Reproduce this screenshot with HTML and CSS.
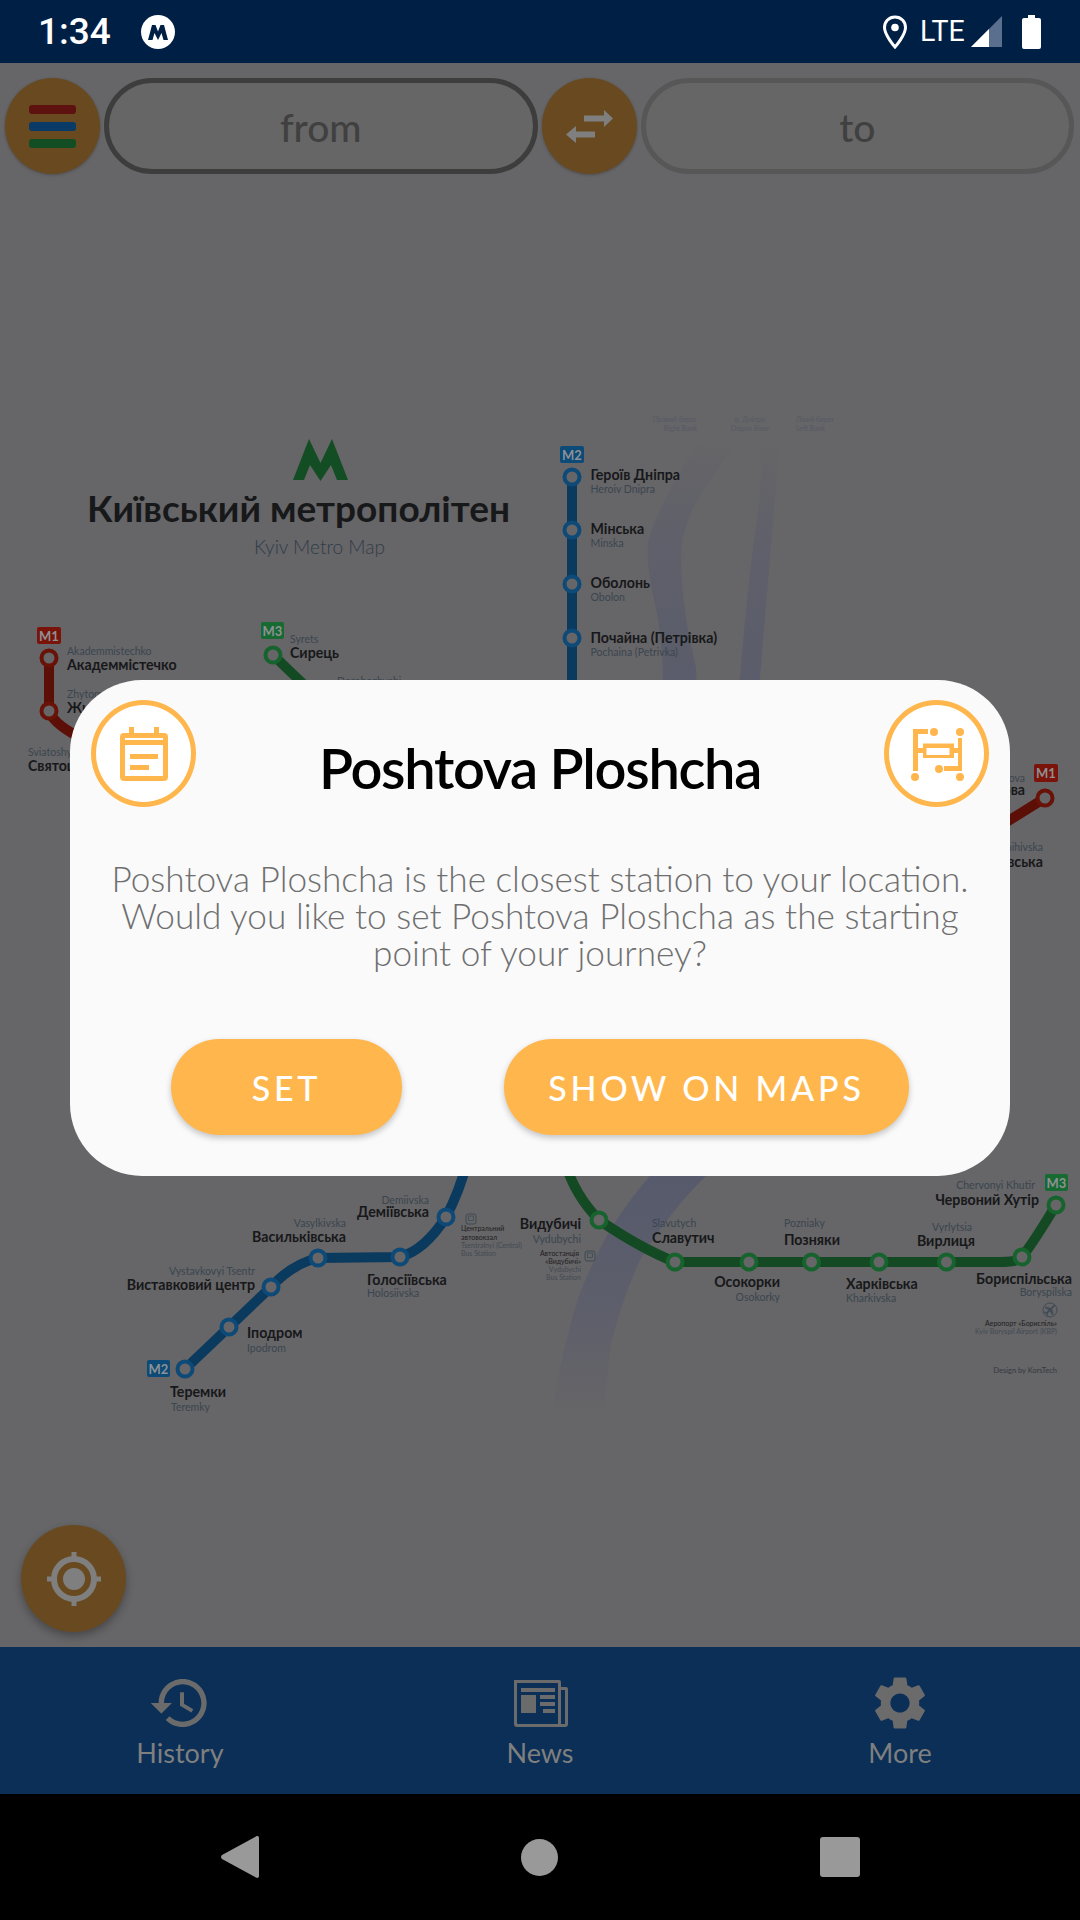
FILE: index.html
```html
<!DOCTYPE html>
<html lang="en">
<head>
<meta charset="utf-8">
<title>Kyiv Metro Map</title>
<link rel="stylesheet" href="styles.css">
</head>
<body>
<div class="screen">
  <header class="statusbar">
    <div class="status-left">
      <span class="clock">1:34</span>
      <svg class="status-m" viewBox="0 0 34 34"><circle cx="17" cy="17" r="17" fill="#fff"/><path d="M7 25 11 10h3.500L17 16.500 19.500 10H23l4 15h-4.500l-2-7L17 25l-3.500-7-2 7z" fill="#001f45"/></svg>
    </div>
    <div class="status-right">
      <svg class="status-pin" viewBox="0 0 24 34"><path d="M12 2C6 2 1.500 6.500 1.500 12.500 1.500 20 12 32 12 32s10.500-12 10.500-19.500C22.500 6.500 18 2 12 2z" fill="none" stroke="#fff" stroke-width="3"/><circle cx="12" cy="12.500" r="3.800" fill="#fff"/></svg>
      <span class="lte">LTE</span>
      <svg class="status-signal" viewBox="0 0 31 31"><path d="M31 0v31H0z" fill="#5a6f8d"/><path d="M18 13v18H0z" fill="#fff"/></svg>
      <svg class="status-battery" viewBox="0 0 19 34"><path d="M6 0h7v3h4a2 2 0 0 1 2 2v27a2 2 0 0 1-2 2H2a2 2 0 0 1-2-2V5a2 2 0 0 1 2-2h4z" fill="#fff"/></svg>
    </div>
  </header>

  <main class="stage">
    <svg class="map" viewBox="0 63 1080 1584" xmlns="http://www.w3.org/2000/svg">
      <defs>
        <linearGradient id="riverFade" x1="0" y1="0" x2="0" y2="1">
          <stop offset="0" stop-color="#565a6c"/>
          <stop offset="0.6" stop-color="#5e5f6b"/>
          <stop offset="1" stop-color="#666567"/>
        </linearGradient>
        <linearGradient id="riverTop" x1="0" y1="0" x2="0" y2="1">
          <stop offset="0" stop-color="#666567"/>
          <stop offset="0.4" stop-color="#5f606a"/>
          <stop offset="1" stop-color="#5a5c6b"/>
        </linearGradient>
      </defs>

      <path d="M696 447Q712 430 737 443Q700 490 690 515Q680 540 681 560Q682 610 696 667L697 690H663Q664 640 652 590Q646 560 648 543Q655 510 696 447z" fill="url(#riverTop)"/>
      <path d="M759 443H779Q776 490 772 533L759 690H739Q746 600 755 533Q764 480 759 443z" fill="url(#riverTop)"/>
      <path d="M655 1170Q620 1210 603 1243Q578 1290 570 1327Q558 1370 552 1415H604Q606 1380 611 1343Q622 1300 640 1260Q670 1210 712 1170z" fill="url(#riverFade)"/>

      <text class="tiny end" x="697" y="422">Правий берег</text>
      <text class="tiny end" x="697" y="431">Right Bank</text>
      <text class="tiny mid" x="750" y="422">р. Дніпро</text>
      <text class="tiny mid" x="750" y="431">Dnipro River</text>
      <text class="tiny" x="796" y="422">Лівий берег</text>
      <text class="tiny" x="796" y="431">Left Bank</text>

      <path class="logo" d="M293 480 309 439 320.500 463 332 439 348 480H337L331 465 320.500 481 310 465 304 480z"/>
      <text class="map-title" x="298.500" y="522">Київський метрополітен</text>
      <text class="map-sub" x="319.500" y="554">Kyiv Metro Map</text>

      <path class="line red" d="M49 658V711Q54 725 85 740"/>
      <path class="line red" d="M1045 798 1000 826"/>
      <path class="line green" d="M273 655 320 700"/>
      <path class="line blue" d="M572 477V700"/>
      <path class="line blue" d="M466 1165Q460 1190 446 1217Q425 1250 400 1257L318 1258Q292 1264 271 1287L185 1369"/>
      <path class="line green" d="M566 1165Q575 1195 599 1220Q640 1248 675 1262H1000Q1018 1262 1022 1257Q1035 1240 1056 1205"/>

      <rect class="badge b-red" x="37" y="627" width="24" height="17" rx="2"/>
      <text class="badge-text" x="49" y="641">M1</text>
      <rect class="badge b-green" x="261" y="622" width="23" height="17" rx="2"/>
      <text class="badge-text" x="272.500" y="636">M3</text>
      <rect class="badge b-blue" x="560" y="446" width="24" height="17" rx="2"/>
      <text class="badge-text" x="572" y="460">M2</text>
      <rect class="badge b-red" x="1034" y="764" width="24" height="18" rx="2"/>
      <text class="badge-text" x="1046" y="778">M1</text>
      <rect class="badge b-blue" x="147" y="1360" width="23" height="17" rx="2"/>
      <text class="badge-text" x="158.500" y="1374">M2</text>
      <rect class="badge b-green" x="1045" y="1174" width="23" height="17" rx="2"/>
      <text class="badge-text" x="1056.500" y="1188">M3</text>

      <circle class="st s-red" cx="49" cy="658" r="7.500"/>
      <circle class="st s-red" cx="49" cy="711" r="7.500"/>
      <circle class="st s-red" cx="1045" cy="798" r="7.500"/>
      <circle class="st s-green" cx="273" cy="655" r="7.500"/>
      <circle class="st s-blue" cx="572" cy="477" r="7.500"/>
      <circle class="st s-blue" cx="572" cy="530" r="7.500"/>
      <circle class="st s-blue" cx="572" cy="584" r="7.500"/>
      <circle class="st s-blue" cx="572" cy="638" r="7.500"/>
      <circle class="st s-blue" cx="185" cy="1369" r="7.500"/>
      <circle class="st s-blue" cx="229" cy="1327" r="7.500"/>
      <circle class="st s-blue" cx="271" cy="1287" r="7.500"/>
      <circle class="st s-blue" cx="318" cy="1258" r="7.500"/>
      <circle class="st s-blue" cx="400" cy="1257" r="7.500"/>
      <circle class="st s-blue" cx="446" cy="1217" r="7.500"/>
      <circle class="st s-green" cx="599" cy="1220" r="7.500"/>
      <circle class="st s-green" cx="675" cy="1262" r="7.500"/>
      <circle class="st s-green" cx="749" cy="1262" r="7.500"/>
      <circle class="st s-green" cx="811.500" cy="1262" r="7.500"/>
      <circle class="st s-green" cx="879" cy="1262" r="7.500"/>
      <circle class="st s-green" cx="946.500" cy="1262" r="7.500"/>
      <circle class="st s-green" cx="1022" cy="1257" r="7.500"/>
      <circle class="st s-green" cx="1056" cy="1205" r="7.500"/>

      <text class="en" x="67" y="655">Akademmistechko</text>
      <text class="ua" x="67" y="670">Академмістечко</text>
      <text class="en" x="67" y="698">Zhytomyrska</text>
      <text class="ua" x="67" y="713">Житомирська</text>
      <text class="en" x="28" y="756">Sviatoshyn</text>
      <text class="ua" x="28" y="771">Святошин</text>
      <text class="en" x="290" y="643">Syrets</text>
      <text class="ua" x="290" y="658">Сирець</text>
      <text class="en" x="337" y="685">Dorohozhychi</text>

      <text class="ua" x="590.500" y="480">Героїв Дніпра</text>
      <text class="en" x="590.500" y="493">Heroiv Dnipra</text>
      <text class="ua" x="590.500" y="534">Мінська</text>
      <text class="en" x="590.500" y="547">Minska</text>
      <text class="ua" x="590.500" y="588">Оболонь</text>
      <text class="en" x="590.500" y="601">Obolon</text>
      <text class="ua" x="590.500" y="643">Почайна (Петрівка)</text>
      <text class="en" x="590.500" y="656">Pochaina (Petrivka)</text>

      <text class="en end" x="1025" y="782">Lisova</text>
      <text class="ua end" x="1025" y="795">Лісова</text>
      <text class="en end" x="1043" y="851">Chernihivska</text>
      <text class="ua end" x="1043" y="867">Чернігівська</text>

      <text class="ua" x="170" y="1397">Теремки</text>
      <text class="en" x="171" y="1411">Teremky</text>
      <text class="ua" x="247" y="1338">Іподром</text>
      <text class="en" x="247" y="1352">Ipodrom</text>
      <text class="en end" x="255" y="1275">Vystavkovyi Tsentr</text>
      <text class="ua end" x="255" y="1290">Виставковий центр</text>
      <text class="en end" x="346" y="1227">Vasylkivska</text>
      <text class="ua end" x="346" y="1242">Васильківська</text>
      <text class="ua" x="367" y="1285">Голосіївська</text>
      <text class="en" x="367" y="1297">Holosiivska</text>
      <text class="en end" x="429" y="1204">Demiivska</text>
      <text class="ua end" x="429" y="1217">Деміївська</text>

      <rect class="bus" x="466" y="1214" width="10" height="10" rx="2"/>
      <rect class="bus-in" x="468.500" y="1216" width="5" height="4.500"/>
      <text class="note-ua" x="461" y="1231">Центральний</text>
      <text class="note-ua" x="461" y="1240">автовокзал</text>
      <text class="note-en" x="461" y="1248">Tsentralnyi (Central)</text>
      <text class="note-en" x="461" y="1256">Bus Station</text>

      <text class="ua end" x="581" y="1229">Видубичі</text>
      <text class="en end" x="581" y="1243">Vydubychi</text>
      <text class="note-ua end" x="579" y="1256">Автостанція</text>
      <text class="note-ua end" x="581" y="1264">«Видубичі»</text>
      <text class="note-en end" x="581" y="1272">Vydubychi</text>
      <text class="note-en end" x="581" y="1280">Bus Station</text>
      <rect class="bus" x="585" y="1251" width="10" height="10" rx="2"/>
      <rect class="bus-in" x="587.500" y="1253" width="5" height="4.500"/>

      <text class="en" x="652" y="1227">Slavutych</text>
      <text class="ua" x="652" y="1243">Славутич</text>
      <text class="en" x="784" y="1227">Pozniaky</text>
      <text class="ua" x="784" y="1245">Позняки</text>
      <text class="en end" x="972" y="1231">Vyrlytsia</text>
      <text class="ua end" x="975" y="1246">Вирлиця</text>
      <text class="ua end" x="780" y="1287">Осокорки</text>
      <text class="en end" x="780" y="1301">Osokorky</text>
      <text class="ua" x="846" y="1289">Харківська</text>
      <text class="en" x="846" y="1302">Kharkivska</text>
      <text class="ua end" x="1072" y="1284">Бориспільська</text>
      <text class="en end" x="1072" y="1296">Boryspilska</text>
      <text class="en end" x="1035" y="1189">Chervonyi Khutir</text>
      <text class="ua end" x="1039" y="1205">Червоний Хутір</text>

      <circle class="bus" cx="1050" cy="1310" r="7"/>
      <path class="plane" d="M1054.500 1304.500c.8.800.5 1.600-.2 2.300l-2.300 2.300 1.500 5.200-1 1-2.600-4-2 2 .2 2-.7.700-1.100-2.400-2.400-1.100.7-.7 2 .2 2-2-4-2.600 1-1 5.200 1.500 2.300-2.300c.7-.7 1.500-1 2.400-.1z"/>
      <text class="note-ua end" x="1057" y="1326">Аеропорт «Бориспіль»</text>
      <text class="note-en end" x="1057" y="1334">Kyiv Boryspil Airport (KBP)</text>
      <text class="design end" x="1057" y="1373">Design by KorsTech</text>
    </svg>

    <div class="topbar">
      <button class="round-btn">
        <span class="menu-bar bar-red"></span>
        <span class="menu-bar bar-blue"></span>
        <span class="menu-bar bar-green"></span>
      </button>
      <div class="pill pill-active">from</div>
      <button class="round-btn">
        <svg class="swap-icon" viewBox="0 0 47 33"><path d="M18 5.500h20V0l9 8.500-9 8.500v-5.500H18zM29 21.500H10V16l-10 8.500L10 33v-5.500h19z" fill="#7f7f7f"/></svg>
      </button>
      <div class="pill">to</div>
    </div>

    <button class="locate-btn">
      <svg class="locate-icon" viewBox="0 0 58 58"><circle cx="29" cy="29" r="20" fill="none" stroke="#7f7f7f" stroke-width="6"/><circle cx="29" cy="29" r="11" fill="#7f7f7f"/><path d="M26.500 2h5v7h-5zM26.500 49h5v7h-5zM2 26.500h7v5H2zM49 26.500h7v5h-7z" fill="#7f7f7f"/></svg>
    </button>

    <section class="dialog">
      <div class="dialog-head">
        <span class="ring">
          <svg class="ring-icon" viewBox="0 0 48 54"><path d="M9 0h5v6h20V0h5v6h5a4 4 0 0 1 4 4v40a4 4 0 0 1-4 4H4a4 4 0 0 1-4-4V10a4 4 0 0 1 4-4h5zM5 18v31h38V18zM5 11v2h38v-2zM10 27h28v5H10zM10 38h19v5H10z" fill="#ffb74d" fill-rule="evenodd"/></svg>
        </span>
        <h1 class="dialog-title">Poshtova Ploshcha</h1>
        <span class="ring">
          <svg class="ring-icon-wide" viewBox="908 724 56 58" fill="#ffb74d">
            <path d="M912 728h15v5h-10v14h5v-4.500h31v4.500h4v-10h4v33h-18v-5h14v-13h-4v5h-31v-5h-5v18h-5zM925.500 747v7h23v-7z" fill-rule="evenodd"/>
            <circle cx="933" cy="731" r="4"/>
            <circle cx="959" cy="731" r="4"/>
            <circle cx="914" cy="776" r="4"/>
            <circle cx="959" cy="776" r="4"/>
            <circle cx="938" cy="768" r="4"/>
          </svg>
        </span>
      </div>
      <p class="dialog-body">Poshtova Ploshcha is the closest station to your location.<br>Would you like to set Poshtova Ploshcha as the starting<br>point of your journey?</p>
      <div class="dialog-actions">
        <button class="action action-set">SET</button>
        <button class="action action-maps">SHOW ON MAPS</button>
      </div>
    </section>
  </main>

  <nav class="tabs">
    <div class="tab">
      <svg class="tab-icon" viewBox="0 0 24 24"><path d="M13 3c-4.970 0-9 4.030-9 9H1l3.890 3.890.07.140L9 12H6c0-3.870 3.130-7 7-7s7 3.130 7 7-3.130 7-7 7c-1.930 0-3.680-.790-4.940-2.060l-1.420 1.420C8.270 19.990 10.510 21 13 21c4.970 0 9-4.030 9-9s-4.030-9-9-9zm-1 5v5l4.280 2.540.720-1.210-3.500-2.080V8H12z"/></svg>
      <span class="tab-label">History</span>
    </div>
    <div class="tab">
      <svg class="tab-icon" viewBox="0 0 64 64"><path fill-rule="evenodd" d="M6 9h45a2 2 0 0 1 2 2v5h5a2 2 0 0 1 2 2v35a3 3 0 0 1-3 3H9a3 3 0 0 1-3-3zM9 12v40a1 1 0 0 0 1 1h40V12zM53 19v34h4V19zM13 17h34v4H13zM13 24h15v18H13zM32 24h15v4H32zM32 31h15v4H32zM35 38h12v4H35z"/></svg>
      <span class="tab-label">News</span>
    </div>
    <div class="tab">
      <svg class="tab-icon" viewBox="0 0 24 24"><path d="M19.140 12.940c.040-.300.060-.610.060-.940 0-.320-.020-.640-.070-.940l2.030-1.580c.180-.140.230-.410.120-.610l-1.920-3.320c-.120-.220-.370-.290-.590-.220l-2.390.960c-.500-.380-1.030-.700-1.620-.940l-.360-2.540c-.040-.240-.240-.410-.480-.410h-3.840c-.240 0-.430.170-.470.410l-.360 2.540c-.590.240-1.130.570-1.620.940l-2.390-.960c-.220-.080-.470 0-.590.220L2.740 8.870c-.120.210-.080.470.120.610l2.030 1.580c-.050.300-.090.630-.090.940s.020.640.07.940l-2.030 1.580c-.180.140-.230.410-.12.610l1.920 3.320c.120.220.370.290.590.220l2.390-.960c.500.380 1.030.700 1.620.940l.360 2.540c.050.240.240.410.480.410h3.840c.240 0 .440-.170.470-.410l.360-2.540c.590-.240 1.130-.560 1.620-.940l2.390.960c.220.080.470 0 .590-.220l1.920-3.320c.120-.220.070-.470-.120-.610l-2.010-1.580zM12 15.600c-1.980 0-3.600-1.620-3.600-3.600s1.620-3.600 3.600-3.600 3.600 1.620 3.600 3.600-1.620 3.600-3.600 3.600z"/></svg>
      <span class="tab-label">More</span>
    </div>
  </nav>

  <footer class="navbar">
    <svg class="nav-back" viewBox="0 0 38 42"><path d="M38 2v38c0 2-2 2.500-3 1.500L1 23c-1.300-1-1.300-3 0-4L35 .5c1-1 3-.5 3 1.500z" fill="#999"/></svg>
    <span class="nav-home"></span>
    <span class="nav-recent"></span>
  </footer>
</div>
</body>
</html>
```

FILE: styles.css
```css
* { box-sizing: border-box; }
html, body { margin: 0; padding: 0; }
body { width: 1080px; height: 1920px; overflow: hidden; font-family: Lato, "Noto Sans", sans-serif; background: #000; }
button { font: inherit; border: 0; padding: 0; }

.screen { width: 1080px; height: 1920px; display: flex; flex-direction: column; }

/* status bar */
.statusbar { height: 63px; flex: none; background: #001f45; display: flex; align-items: center; justify-content: space-between; padding: 0 38px; color: #fff; }
.status-left { display: flex; align-items: center; gap: 30px; }
.clock { font-family: Roboto, sans-serif; font-size: 37px; font-weight: 500; line-height: 1; }
.status-m { width: 34px; height: 34px; display: block; }
.status-right { display: flex; align-items: center; }
.status-pin { width: 24px; height: 34px; display: block; }
.lte { font-family: Roboto, sans-serif; font-size: 30px; line-height: 1; margin-left: 13px; transform: scaleX(.95); transform-origin: left center; width: 48px; margin-top: -2px; }
.status-signal { width: 31px; height: 31px; display: block; margin-left: 3px; }
.status-battery { width: 19px; height: 34px; display: block; margin-left: 20px; margin-right: 1px; }

/* stage */
.stage { flex: 1; position: relative; background: #666567; overflow: hidden; }
.map { position: absolute; left: 0; top: 0; width: 1080px; height: 1584px; display: block; }

.topbar { position: relative; display: flex; align-items: center; gap: 4px; padding: 15px 6px 0 5px; }
.round-btn { width: 95px; height: 96px; flex: none; border-radius: 50%; background: #694a20; display: flex; flex-direction: column; align-items: center; justify-content: center; gap: 8px; box-shadow: 0 1px 3px rgba(0,0,0,.25); }
.menu-bar { width: 47px; height: 9px; border-radius: 3px; display: block; }
.bar-red { background: #5e1210; }
.bar-blue { background: #0a3a66; }
.bar-green { background: #124d23; }
.swap-icon { width: 47px; height: 33px; display: block; }
.pill { flex: 1; height: 96px; border-radius: 48px; border: 5px solid #575757; background: #666666; display: flex; align-items: center; justify-content: center; font-size: 39px; font-weight: 500; color: #404040; padding-top: 2px; }
.pill-active { border-color: #3d3d3d; }

.locate-btn { position: absolute; left: 21px; top: 1462px; width: 105px; height: 107px; border-radius: 50%; background: #694a20; display: flex; align-items: center; justify-content: center; box-shadow: 0 4px 8px rgba(0,0,0,.3); }
.locate-icon { width: 58px; height: 58px; display: block; }

/* dialog */
.dialog { position: absolute; left: 70px; top: 617px; width: 940px; height: 496px; background: #fafafa; border-radius: 72px; display: flex; flex-direction: column; }
.dialog-head { display: flex; align-items: center; justify-content: space-between; padding: 20px 21px 0; }
.ring { width: 105px; height: 107px; border-radius: 50%; border: 5px solid #ffb74d; display: flex; align-items: center; justify-content: center; background: #fff; flex: none; }
.ring-icon { width: 48px; height: 54px; display: block; }
.ring-icon-wide { width: 56px; height: 58px; display: block; }
.dialog-title { margin: 0; font-size: 56px; font-weight: 600; letter-spacing: -1.3px; color: #000; line-height: 1; padding-top: 28px; }
.dialog-body { margin: 53px 0 0; text-align: center; font-size: 35.200px; font-weight: 300; line-height: 37px; color: #6f6f6f; }
.dialog-actions { display: flex; padding: 68px 0 0 101px; gap: 102px; }
.action { height: 96px; border-radius: 48px; background: #ffb74d; color: #fff; font-size: 34px; font-weight: 500; letter-spacing: 3.800px; box-shadow: 0 3px 6px rgba(0,0,0,.22); }
.action-set { width: 231px; }
.action-maps { width: 405px; }

/* tabs */
.tabs { height: 147px; flex: none; background: #0b2f56; display: grid; grid-template-columns: repeat(3, 1fr); }
.tab { display: flex; flex-direction: column; align-items: center; padding-top: 24px; }
.tab-icon { width: 64px; height: 64px; display: block; fill: #6b6b6b; }
.tab-label { font-size: 27px; font-weight: 400; line-height: 34px; color: #7f7f7f; margin-top: 1px; }

/* nav bar */
.navbar { height: 126px; flex: none; background: #000; display: flex; align-items: center; justify-content: center; gap: 262px; }
.nav-back { width: 38px; height: 42px; display: block; }
.nav-home { width: 37px; height: 37px; border-radius: 50%; background: #999; display: block; }
.nav-recent { width: 40px; height: 40px; border-radius: 3px; background: #999; display: block; }

/* map text */
.map text { font-family: Lato, "Noto Sans", sans-serif; }
.map .end { text-anchor: end; }
.map .mid { text-anchor: middle; }
.map .en { font-size: 10.500px; fill: #3a4650; font-weight: 400; }
.map .ua { font-size: 14.200px; fill: #17181a; font-weight: 700; }
.map .tiny { font-size: 7px; fill: #565a66; }
.map .note-ua { font-size: 7px; fill: #1f2022; }
.map .note-en { font-size: 7px; fill: #434b55; }
.map .design { font-size: 7.500px; fill: #333a42; }
.map .map-title { font-size: 37px; font-weight: 700; fill: #17181a; text-anchor: middle; }
.map .map-sub { font-size: 19px; font-weight: 300; fill: #2f3c49; text-anchor: middle; }
.map .badge-text { font-size: 13px; font-weight: 700; fill: #8d9195; text-anchor: middle; }
.logo { fill: #134d23; }
.line { fill: none; stroke-width: 10; }
.red { stroke: #5c0f07; }
.blue { stroke: #0b3a5f; }
.green { stroke: #134a24; }
.st { fill: #666567; stroke-width: 4; }
.s-red { stroke: #691208; }
.s-blue { stroke: #0e4a78; }
.s-green { stroke: #17632e; }
.b-red { fill: #7a140a; }
.b-blue { fill: #0c4a78; }
.b-green { fill: #176a32; }
.bus { fill: none; stroke: #3f4b55; stroke-width: 1; }
.bus-in { fill: none; stroke: #3f4b55; stroke-width: .8; }
.plane { fill: #3f4b55; }
```
